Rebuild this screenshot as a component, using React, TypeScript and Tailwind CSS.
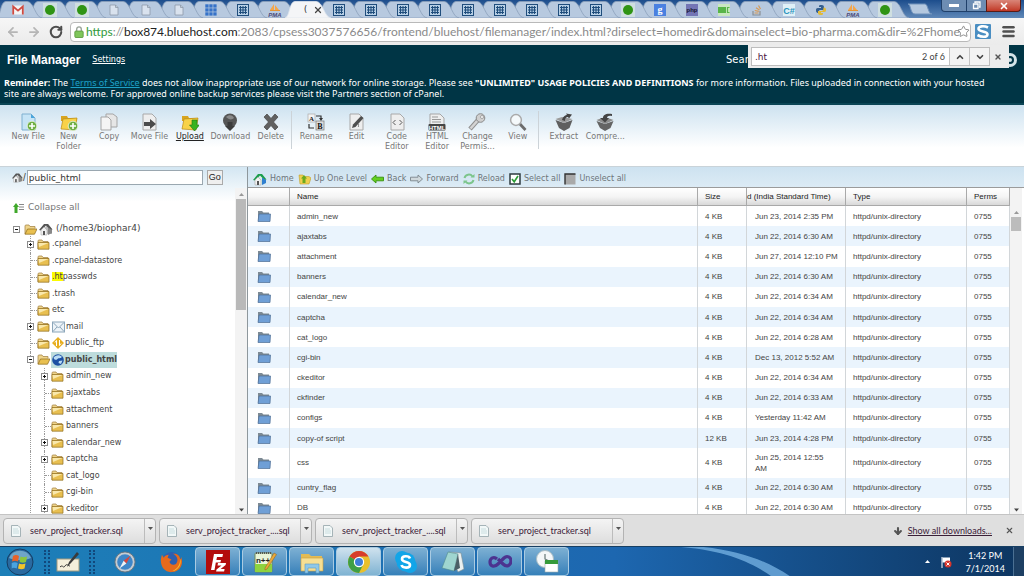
import type { ReactNode } from "react";
import { ArrowDown, ArrowLeft, ArrowRight, ChevronDown, ChevronUp, Menu, RotateCw, Star, X } from "lucide-react";

const SANS = "font-['Verdana','DejaVu_Sans',sans-serif]";
const ARIAL = "font-['Liberation_Sans',Arial,sans-serif]";
const SEGOE = "font-['Lato','Noto_Sans',sans-serif]";
const NOTO = "font-['Noto_Sans',sans-serif]";

/* ---------- Browser tabs ---------- */

type TabKind = "gmail" | "dot" | "page" | "squares" | "grid" | "pma" | "active" | "google" | "php" | "csgreen" | "stack" | "csharp" | "python";

const TABS: TabKind[] = [
  "gmail", "dot", "dot", "page", "page", "page", "squares", "grid", "pma", "active",
  "grid", "grid", "grid", "grid", "grid", "grid", "grid", "grid", "grid",
  "dot", "google", "php", "csgreen", "stack", "csharp", "python", "pma", "dot",
];

function Favicon({ kind }: { kind: TabKind }) {
  switch (kind) {
    case "gmail":
      return (
        <svg viewBox="0 0 12 12" className="size-3">
          <rect x="0.5" y="1.5" width="11" height="9" fill="#f4f4f4" />
          <path d="M1.2 10.5V2.5L6 6.6l4.800-4.100v8" fill="none" stroke="#cf4a41" strokeWidth="1.800" />
        </svg>
      );
    case "dot":
      return (
        <svg viewBox="0 0 14 14" className="size-3.5">
          <rect width="14" height="14" fill="#cfdfe0" />
          <circle cx="7" cy="7" r="5" fill="#2f9414" />
        </svg>
      );
    case "page":
      return (
        <svg viewBox="0 0 12 12" className="size-3">
          <path d="M2 1h5.500L10 3.500V11H2z" fill="#d9e2ee" stroke="#8d99a8" strokeWidth="0.800" />
          <path d="M7.500 1v2.500H10" fill="none" stroke="#8d99a8" strokeWidth="0.800" />
        </svg>
      );
    case "squares":
      return (
        <svg viewBox="0 0 12 12" className="size-3">
          {[0, 4, 8].map((y) => [0, 4, 8].map((x) => <rect key={`${x}-${y}`} x={x + 0.3} y={y + 0.3} width="3.300" height="3.300" fill="#3672c8" />))}
        </svg>
      );
    case "grid":
      return (
        <svg viewBox="0 0 12 12" className="size-3">
          <rect width="12" height="12" fill="#b8d0e6" />
          <rect x="0.5" y="0.5" width="11" height="11" fill="none" stroke="#1f4d7c" />
          <path d="M2 3.500h8M2 6h8M2 8.500h8M3.500 2v8M6 2v8M8.500 2v8" stroke="#1f4d7c" strokeWidth="1.100" />
        </svg>
      );
    case "pma":
      return (
        <svg viewBox="0 0 14 14" className="size-3.5">
          <path d="M6 1v6H2zM7 2l4 5H7z" fill="#f4a64a" />
          <path d="M2 7.500h10" stroke="#e59535" />
          <text x="7" y="13.500" textAnchor="middle" fontSize="6" fontStyle="italic" fontWeight="700" fill="#4a4a78" fontFamily="Liberation Sans">PMA</text>
        </svg>
      );
    case "google":
      return (
        <svg viewBox="0 0 12 12" className="size-3">
          <rect width="12" height="12" fill="#4a80e0" />
          <text x="6" y="8.500" textAnchor="middle" fontSize="10" fontWeight="700" fill="#fff" fontFamily="Liberation Serif">g</text>
        </svg>
      );
    case "php":
      return (
        <svg viewBox="0 0 12 12" className="size-3">
          <rect width="12" height="12" fill="#7375b5" />
          <text x="6" y="8" textAnchor="middle" fontSize="6" fontWeight="700" fill="#16162e" fontFamily="Liberation Sans">php</text>
        </svg>
      );
    case "csgreen":
      return (
        <svg viewBox="0 0 12 12" className="size-3">
          <rect width="12" height="12" fill="#c9e8bf" />
          <rect y="3" width="8" height="6" fill="#58b548" />
          <path d="M11.500 3.500H9.500v5h2" fill="none" stroke="#58b548" strokeWidth="1.200" />
        </svg>
      );
    case "stack":
      return (
        <svg viewBox="0 0 12 12" className="size-3">
          <path d="M2 7v4h7V7" fill="none" stroke="#8b8f94" strokeWidth="1.200" />
          <path d="M3.500 9h4M3.800 6.500l4 .8M5 3.800l3.500 2.100M7.500 1.500l2 3.500" stroke="#d79a55" strokeWidth="1.200" />
        </svg>
      );
    case "csharp":
      return (
        <svg viewBox="0 0 12 12" className="size-3">
          <rect width="12" height="12" fill="#dff0f7" />
          <text x="6" y="9.500" textAnchor="middle" fontSize="9" fontWeight="700" fill="#2a93bd" fontFamily="Liberation Sans">C#</text>
        </svg>
      );
    case "python":
      return (
        <svg viewBox="0 0 12 12" className="size-3">
          <path d="M6 1c3 0 3 1 3 3v2H5c-1.500 0-1.500 3-1.500 3C1 9 1 7 1 6s0-2 2-2h3V3H4c0-1.500 0-2 2-2z" fill="#35608f" />
          <path d="M6 11c-3 0-3-1-3-3V7h4c1.500 0 1.500-3.500 1.500-3.500C11 3.500 11 5 11 6s0 2-2 2H6v1h2c0 1.500 0 2-2 2z" fill="#e3bb38" />
        </svg>
      );
    default:
      return (
        <span className="flex w-full items-center justify-end gap-1.5 pl-1">
          <span className={`${SANS} text-[8px] text-[#222]`}>(</span>
          <X className="size-2.5 text-[#444]" strokeWidth={3} />
        </span>
      );
  }
}

function TabStrip() {
  return (
    <div className="flex h-[18px] shrink-0 overflow-hidden bg-gradient-to-b from-[#1c4d8c] to-[#5f88b8]">
      <div role="tablist" className="flex w-[901px] pl-0.5">
        {TABS.map((kind, i) => {
          const active = kind === "active";
          return (
            <button
              key={i}
              role="tab"
              aria-selected={active}
              aria-label={`Tab ${i + 1}`}
              className="relative flex min-w-0 flex-1 items-center justify-center"
              style={{ zIndex: active ? 60 : 40 - i }}
            >
              <svg viewBox="0 0 46 18" preserveAspectRatio="none" className="absolute top-0 -left-1.5 h-full w-[46px]">
                <path d="M0 18C5 17 4 1.500 10 1.500H31C38 1.500 39 17 46 18z" fill={active ? "#f4f5f7" : "#b7c9df"} stroke={active ? "#dfe6ee" : "#8ba0ba"} strokeWidth="0.800" />
              </svg>
              <span className="relative flex w-full items-center justify-center pt-0.5"><Favicon kind={kind} /></span>
            </button>
          );
        })}
      </div>
      <button aria-label="New tab" className="ml-1.5">
        <svg viewBox="0 0 26 12" className="h-3 w-[26px]">
          <path d="M1 1h17c3 0 3 10 7 10H8C3 11 4 1 1 1z" fill="#b4c8df" stroke="#6f91ba" />
        </svg>
      </button>
      <div className="ml-auto flex h-3 pr-[3px]">
        <button aria-label="Minimize" className="flex w-[26px] items-center justify-center rounded-bl border border-t-0 border-[#20406a] bg-[#6d8db3]">
          <span className="h-[3px] w-2.5 bg-white" />
        </button>
        <button aria-label="Restore" className="flex w-[19px] items-center justify-center border-b border-[#20406a] bg-[#6d8db3]">
          <svg viewBox="0 0 9 9" className="size-[9px]"><path d="M3 2V1h5v5H7M1.500 3h4.500v4.500H1.500z" fill="none" stroke="#fff" strokeWidth="1.300" /></svg>
        </button>
        <button aria-label="Close window" className="flex w-[35px] items-center justify-center rounded-br border border-t-0 border-[#5a1a14] bg-gradient-to-b from-[#d98578] to-[#c03624]">
          <X className="size-2.5 text-white" strokeWidth={4} />
        </button>
      </div>
    </div>
  );
}

function AddressBar() {
  return (
    <div className="flex h-[27px] shrink-0 items-center bg-gradient-to-b from-[#f6f6f6] to-[#ebebeb] pr-2 pl-1.5">
      <button aria-label="Back" className="w-[21px]"><ArrowLeft className="size-3.5 text-[#b5b5b5]" strokeWidth={3} /></button>
      <button aria-label="Forward" className="w-[22px]"><ArrowRight className="size-3.5 text-[#b5b5b5]" strokeWidth={3} /></button>
      <button aria-label="Reload page" className="w-[21px]"><RotateCw className="size-3.5 text-[#4e4e4e]" strokeWidth={3.5} /></button>
      <div className="flex h-5 min-w-0 flex-1 items-center rounded-sm border border-[#b9b9b9] bg-white pl-[3px]">
        <svg viewBox="0 0 10 13" className="h-3 w-2.5 shrink-0">
          <path d="M2.500 6V3.500a2.500 2.500 0 015 0V6" fill="none" stroke="#9aa39a" strokeWidth="1.500" />
          <rect x="0.500" y="5.500" width="9" height="7" rx="1" fill="#7fc65a" stroke="#5f9c42" />
        </svg>
        <div className={`${SEGOE} ml-0.5 min-w-0 flex-1 text-[12px] leading-[18px] whitespace-nowrap text-[#8a8a8a]`}>
          <span className="text-[#2f9a3a]">https</span>://<span className="text-[#222]">box874.bluehost.com</span>:2083/cpsess3037576656/frontend/bluehost/filemanager/index.html?dirselect=homedir&amp;domainselect=bio-pharma.com&amp;dir=%2Fhome
        </div>
        <button aria-label="Bookmark"><Star className="size-[13px] text-[#777]" strokeWidth={1.5} /></button>
      </div>
      <button aria-label="Extension" className="ml-1">
        <svg viewBox="0 0 16 15" className="h-[15px] w-4">
          <rect width="16" height="15" rx="1" fill="#4a8ec2" />
          <path d="M13 3.500C9 1.500 3 2 3.500 5S13 7 12.500 10.500 6 13 2.500 11" fill="none" stroke="#fff" strokeWidth="2.600" />
        </svg>
      </button>
      <button aria-label="Menu" className="ml-2.5"><Menu className="size-[15px] text-[#505050]" strokeWidth={4} /></button>
    </div>
  );
}

function FindBar() {
  return (
    <div className="absolute top-0 right-[15px] z-10 flex h-[23px] w-[261px] items-center bg-[#ececec] px-[3px]">
      <div className="flex h-[19px] w-[239px] items-center border border-[#bdbdbd] bg-white">
        <input aria-label="Find in page" defaultValue=".ht" className={`${SANS} h-full min-w-0 flex-1 pl-[3px] text-[9px] text-[#4a1040] outline-none`} />
        <span className={`${SEGOE} pr-1 text-[9px] text-[#444]`}>2 of 6</span>
        <button aria-label="Previous match" className="flex h-full w-5 items-center justify-center border-l border-[#c4c4c4] bg-[#f3f3f3]"><ChevronUp className="size-2.5 text-[#444]" strokeWidth={4} /></button>
        <button aria-label="Next match" className="flex h-full w-5 items-center justify-center border-l border-[#c4c4c4] bg-[#f3f3f3]"><ChevronDown className="size-2.5 text-[#444]" strokeWidth={4} /></button>
      </div>
      <button aria-label="Close find bar" className="ml-1"><X className="size-2 text-[#555]" strokeWidth={4} /></button>
    </div>
  );
}

function Header() {
  return (
    <header className={`${SANS} relative h-[60px] shrink-0 border-b-2 border-[#0b4656] bg-[#003545] text-white`}>
      <FindBar />
      <div className="flex h-[29px] items-center px-[7px]">
        <h1 className={`${ARIAL} text-[12px] font-bold`}>File Manager</h1>
        <a href="#settings" className="ml-3 text-[8px] underline">Settings</a>
        <span className="ml-auto w-[277px] text-[10px]">Search</span>
        <button aria-label="Go search" className="flex size-3.5 items-center justify-center rounded-full bg-[#d5e4e8]"><span className="size-2 rounded-full border-2 border-[#003545]" /></button>
      </div>
      <p className={`${NOTO} pt-[3px] pl-1 text-[9px] leading-[11px] whitespace-nowrap`}>
        <b>Reminder:</b> The <a href="#terms" className="text-[#1ea2c8] underline">Terms of Service</a> does not allow inappropriate use of our network for online storage. Please see <b>"UNLIMITED" USAGE POLICIES AND DEFINITIONS</b> for more information. Files uploaded in connection with your hosted
        <br />
        site are always welcome. For approved online backup services please visit the Partners section of cPanel.
      </p>
    </header>
  );
}

/* ---------- Main toolbar ---------- */

const pageShape = <path d="M3 1h9l4 4v12H3z" fill="#eee" stroke="#a8a8a8" />;
const yellowFolder = (
  <>
    <path d="M1 3h6l1 2h9v3H1z" fill="#d8a520" />
    <path d="M1 16L3 6l14-1-2 12z" fill="#f8d247" stroke="#b98a16" strokeWidth="0.700" />
  </>
);
const plusBadge = (
  <>
    <circle cx="13" cy="13" r="4.800" fill="#6faf45" stroke="#eef7e6" strokeWidth="0.800" />
    <path d="M13 10v6M10 13h6" stroke="#fff" strokeWidth="1.600" />
  </>
);

const ICONS: Record<string, ReactNode> = {
  "New File": <><path d="M3 1h9l4 4v12H3z" fill="#c6e4f6" stroke="#7fb0d0" /><path d="M12 1v4h4z" fill="#4aa5dc" />{plusBadge}</>,
  "New Folder": <>{yellowFolder}{plusBadge}</>,
  Copy: <><path d="M6 1h7l4 3v10H6z" fill="#e6e6e6" stroke="#a5a5a5" /><path d="M1 4h7l3 3v10H1z" fill="#f4f4f4" stroke="#a5a5a5" /></>,
  "Move File": <>{pageShape}<path d="M4 9h6V6l6 5-6 5v-3H4z" fill="#4b4b4b" /></>,
  Upload: <>{yellowFolder}<path d="M11 7h5v5h2.500L13.500 18 8.500 12H11z" fill="#39b320" stroke="#1d7a10" strokeWidth="0.600" /></>,
  Download: <><circle cx="9" cy="7.500" r="7" fill="#565656" /><path d="M5 4c3-3 7-2 8 1-2 2-5 2-8-1z" fill="#8a8a8a" /><path d="M6.500 9h5v4H14l-5 5-5-5h2.500z" fill="#3c3c3c" /></>,
  Delete: <path d="M2 4l3-3 4 4.500L13 1l3 3-4.500 5L16 14l-3 3-4-4.500L5 17l-3-3 4.500-5z" fill="#616161" stroke="#444" strokeWidth="0.700" />,
  Rename: <><rect x="1" y="1" width="7" height="8" fill="#f3f3f3" stroke="#aaa" strokeWidth="0.700" /><text x="4.500" y="7.800" textAnchor="middle" fontSize="7" fontWeight="700" fill="#222" fontFamily="Liberation Serif">A</text><rect x="9" y="8" width="8" height="9" fill="#ddd" stroke="#777" strokeWidth="0.700" /><text x="13" y="15.500" textAnchor="middle" fontSize="8" fontWeight="700" fill="#111" fontFamily="Liberation Serif">B</text><path d="M9 3h5v3M2 11v4h5" fill="none" stroke="#333" strokeWidth="1.200" /><path d="M12 5h4l-2 3z" fill="#333" /></>,
  Edit: <>{pageShape}<path d="M5 15l1-3.500 8-8.500 2.500 2-8 9z" fill="#4e4e4e" /><path d="M12 14c-2-1 1-2-1-3" stroke="#777" fill="none" /></>,
  "Code Editor": <>{pageShape}<path d="M7.500 7L5 9.500 7.500 12M11.500 7L14 9.500 11.500 12" fill="none" stroke="#555" /></>,
  "HTML Editor": <><path d="M2 1h10l4 4v7H2z" fill="#eee" stroke="#a5a5a5" /><path d="M4 4h6M4 6.500h9M4 9h9" stroke="#999" /><rect x="0.500" y="11" width="17" height="6.500" rx="1" fill="#454545" /><text x="9" y="16.500" textAnchor="middle" fontSize="6" fontWeight="700" fill="#fff" fontFamily="Liberation Sans">HTML</text></>,
  "Change Permis...": <><path d="M2 16l8-9" stroke="#8e8e8e" strokeWidth="4.500" /><path d="M2.500 15.500l8-9" stroke="#d4d4d4" strokeWidth="2.600" /><circle cx="12.500" cy="5" r="4.300" fill="#cfcfcf" stroke="#8a8a8a" /><circle cx="14" cy="4" r="1.500" fill="#fff" stroke="#8a8a8a" strokeWidth="0.700" /></>,
  View: <><path d="M10.500 10.500l6 6.500" stroke="#6c6c6c" strokeWidth="2.800" /><circle cx="7" cy="7" r="5.400" fill="#f5f9fb" stroke="#aaa" strokeWidth="1.500" /></>,
  Extract: <><path d="M0.500 7l8.500 3 8.500-3-3 8-5.500 3-5-3z" fill="#5f5f5f" /><path d="M0.500 6l6.500-2 10.500 2L9 10z" fill="#9a9a9a" /><path d="M7 7c1-4 4-5 5-5l-1-1.500 6 1-3 4-1-1.500c-2 0-3 1-3 4z" fill="#444" /></>,
  "Compre...": <><path d="M0.500 8L9 11l8.500-3-3 7L9 18l-5-3z" fill="#646464" /><path d="M0.500 7L9 4l8.500 3L9 11z" fill="#8c8c8c" /><path d="M16 1C10 0 7 2 7 5H4l5 4.500L13 5h-2c0-1 1-3 5-2z" fill="#444" /></>,
};

const GROUPS: { width: string; items: string[] }[] = [
  { width: "w-[283px]", items: ["New File", "New Folder", "Copy", "Move File", "Upload", "Download", "Delete"] },
  { width: "w-[247px]", items: ["Rename", "Edit", "Code Editor", "HTML Editor", "Change Permis...", "View"] },
  { width: "w-[88px]", items: ["Extract", "Compre..."] },
];

const WRAPPED = ["New Folder", "Code Editor", "HTML Editor", "Change Permis..."];

function MainToolbar() {
  return (
    <div className={`${SANS} flex h-[61px] shrink-0 bg-gradient-to-b from-[#cde2f0] to-white to-70% pt-1.5 pl-2`}>
      {GROUPS.map((group, g) => (
        <div key={g} className={`${group.width} ${g ? "border-l border-[#ccd3d8] pl-1" : ""} flex h-[38px]`}>
          {group.items.map((name) => (
            <button key={name} className="flex min-w-0 flex-1 flex-col items-center pt-0.5 text-[8px] leading-[10px] text-[#777]">
              <svg viewBox="0 0 18 18" className="size-[18px] shrink-0">{ICONS[name]}</svg>
              <span className={name === "Upload" ? "pt-px text-[#222] underline" : WRAPPED.includes(name) ? "w-9 pt-px" : "pt-px whitespace-nowrap"}>{name}</span>
            </button>
          ))}
        </div>
      ))}
    </div>
  );
}

/* ---------- Folder tree ---------- */

function HomeIcon({ colored = false, small = false }: { colored?: boolean; small?: boolean }) {
  return (
    <svg viewBox="0 0 14 14" className={`${small ? "size-[11px]" : "size-3.5"} shrink-0`}>
      <path d="M4 8l5-6 4 5v5H4z" fill={colored ? "#d8f0e4" : "#bcbcbc"} />
      <path d="M0 8l5-6 4 0 4.500 5.500-2 .5L7 3.500 2 8.500z" fill={colored ? "#1c9e4c" : "#555"} />
      <path d="M2 8l3-3 3 3v5H2z" fill="#f2f2f2" stroke="#999" strokeWidth="0.500" />
      <path d="M9 5.500l4 2.500v3l-4 2z" fill={colored ? "#2f7fd0" : "#888"} />
      <rect x="4" y="9" width="2" height="4" fill="#555" />
    </svg>
  );
}

function TreeFolder({ open = false }: { open?: boolean }) {
  return (
    <svg viewBox="0 0 13 11" className="h-[11px] w-[13px] shrink-0">
      <path d="M1 10V2q0-1 1-1h3l1 1.500h5v2" fill="#efd48a" stroke="#a8894b" strokeWidth="0.800" />
      {open ? <path d="M1 10.200L3.500 5H13l-2.500 5.200z" fill="#e9c050" stroke="#8d6a1c" strokeWidth="0.700" /> : <path d="M1 3.500h11v6.700H1z" fill="#e8bf50" stroke="#8d6a1c" strokeWidth="0.700" />}
      {!open && <path d="M1.500 4h10L2 8z" fill="#f9e8ac" />}
    </svg>
  );
}

interface Node { name: ReactNode; key: string; depth: 1 | 2; toggle?: "+" | "-"; extra?: ReactNode }

const mailIcon = (
  <svg viewBox="0 0 13 12" className="h-3 w-[13px] shrink-0">
    <rect x="0.500" y="1" width="12" height="10" fill="#edf3f8" stroke="#8ca6ba" />
    <path d="M1 1.500L6.500 7 12 1.500M1 10.500L5 6M12 10.500L8 6" fill="none" stroke="#8ca6ba" />
  </svg>
);
const ftpIcon = (
  <svg viewBox="0 0 12 12" className="size-3 shrink-0">
    <path d="M6 0l6 6-6 6-6-6z" fill="#e7ae1e" />
    <path d="M4.500 9V3.500L3 5.500M7.500 3v5.500L9 6.500" fill="none" stroke="#fff" />
  </svg>
);
const globeIcon = (
  <svg viewBox="0 0 12 12" className="size-3 shrink-0">
    <circle cx="6" cy="6" r="5.800" fill="#1c4fa3" />
    <path d="M1.500 3.500C3 1 8 0 10 3 8 5 7 3.500 5.500 5S2 6 1.500 3.500zM7 7l3.500-.5L9 10 6.500 9z" fill="#b9dcf4" />
  </svg>
);

const NODES: Node[] = [
  { key: ".cpanel", name: ".cpanel", depth: 1, toggle: "+" },
  { key: ".cpanel-datastore", name: ".cpanel-datastore", depth: 1 },
  { key: ".htpasswds", name: <><mark className="bg-[#fbfb00] text-inherit">.ht</mark>passwds</>, depth: 1 },
  { key: ".trash", name: ".trash", depth: 1 },
  { key: "etc", name: "etc", depth: 1 },
  { key: "mail", name: "mail", depth: 1, toggle: "+", extra: mailIcon },
  { key: "public_ftp", name: "public_ftp", depth: 1, extra: ftpIcon },
  { key: "public_html", name: "public_html", depth: 1, toggle: "-", extra: globeIcon },
  { key: "admin_new", name: "admin_new", depth: 2, toggle: "+" },
  { key: "ajaxtabs", name: "ajaxtabs", depth: 2 },
  { key: "attachment", name: "attachment", depth: 2 },
  { key: "banners", name: "banners", depth: 2 },
  { key: "calendar_new", name: "calendar_new", depth: 2, toggle: "+" },
  { key: "captcha", name: "captcha", depth: 2, toggle: "+" },
  { key: "cat_logo", name: "cat_logo", depth: 2 },
  { key: "cgi-bin", name: "cgi-bin", depth: 2 },
  { key: "ckeditor", name: "ckeditor", depth: 2, toggle: "+" },
];

function Toggle({ sign }: { sign: "+" | "-" }) {
  return (
    <svg viewBox="0 0 7 7" className="size-[7px]">
      <rect x="0.500" y="0.500" width="6" height="6" fill="#fff" stroke="#8c8c8c" />
      <path d={sign === "+" ? "M2 3.500h3M3.500 2v3" : "M2 3.500h3"} stroke="#111" />
    </svg>
  );
}

function Tree() {
  return (
    <ul className="grid h-[281px] auto-rows-fr pl-[27px]">
      {NODES.map((node) => {
        const selected = node.key === "public_html";
        return (
          <li key={node.key} className="flex min-h-0 items-center">
            {node.depth === 2 && <span className="ml-[3px] w-[11px] self-stretch border-l border-dotted border-[#999]" />}
            <span className="ml-[3px] flex w-[7px] items-center self-stretch border-l border-dotted border-[#999]">
              {node.toggle ? (
                <button aria-label={`Toggle ${node.key}`} className="-ml-1 flex"><Toggle sign={node.toggle} /></button>
              ) : (
                <span className="w-full border-t border-dotted border-[#999]" />
              )}
            </span>
            <TreeFolder open={selected} />
            <a href={`#${node.key}`} className={`${selected ? "bg-[#bddcdc] font-bold" : ""} ml-px flex h-4 items-center gap-px pl-px text-[#444]`}>
              {node.extra}
              <span>{node.name}</span>
            </a>
          </li>
        );
      })}
    </ul>
  );
}

function ScrollArrow({ down = false }: { down?: boolean }) {
  return (
    <svg viewBox="0 0 11 9" className="h-[9px] w-[11px] shrink-0">
      <path d={down ? "M3 3.500h5L5.500 6.500z" : "M3 6h5L5.500 3z"} fill={down ? "#444" : "#999"} />
    </svg>
  );
}

function Sidebar() {
  return (
    <aside className={`${SANS} flex min-h-0 w-[248px] shrink-0 flex-col border-r border-[#8e979c] bg-gradient-to-b from-[#d3e6f2] to-white to-10% text-[8px]`}>
      <form className="flex h-[21px] shrink-0 items-center pl-3 text-[#444]" onSubmit={(e) => e.preventDefault()}>
        <HomeIcon small />
        <label htmlFor="path" className={`${ARIAL} mr-px text-[10px]`}>/</label>
        <input id="path" aria-label="Path" defaultValue="public_html" className="h-[15px] w-[176px] border border-[#9aa7b0] bg-white px-px text-[9px] text-[#333] outline-none" />
        <button className={`${ARIAL} ml-1 h-[15px] w-4 border border-[#aaa] bg-[#efefef] text-[9px] text-[#222]`}>Go</button>
      </form>
      <div className="flex min-h-0 flex-1">
        <div className="min-w-0 flex-1 overflow-hidden pt-1.5">
          <button className="flex h-7 items-center gap-1 pl-[13px] text-[9px] text-[#777]">
            <svg viewBox="0 0 11 10" className="h-2.5 w-[11px]">
              <path d="M3 0l3 4H4.500v6h-3V4H0z" fill="#3fa82a" />
              <path d="M6 1.500h5M6 4h5M6 6.500h5" stroke="#888" />
            </svg>
            Collapse all
          </button>
          <div className="flex h-3.5 items-center pl-[13px] text-[#444]">
            <button aria-label="Toggle home" className="mr-1 flex"><Toggle sign="-" /></button>
            <TreeFolder open />
            <span className="mr-[3px] ml-0.5"><HomeIcon /></span>
            <a href="#home" className="text-[9px]">(/home3/biophar4)</a>
          </div>
          <Tree />
        </div>
        <div className="flex w-3 shrink-0 flex-col items-center bg-[#f3f3f3] pt-0.5">
          <ScrollArrow />
          <span className="h-[111px] w-2.5 bg-[#b9b9b9]" />
          <span className="mt-auto"><ScrollArrow down /></span>
        </div>
      </div>
    </aside>
  );
}

/* ---------- File listing ---------- */

interface FileRow { name: string; size: string; date: string }

const FILES: FileRow[] = [
  { name: "admin_new", size: "4 KB", date: "Jun 23, 2014 2:35 PM" },
  { name: "ajaxtabs", size: "4 KB", date: "Jun 22, 2014 6:30 AM" },
  { name: "attachment", size: "4 KB", date: "Jun 27, 2014 12:10 PM" },
  { name: "banners", size: "4 KB", date: "Jun 22, 2014 6:30 AM" },
  { name: "calendar_new", size: "4 KB", date: "Jun 22, 2014 6:34 AM" },
  { name: "captcha", size: "4 KB", date: "Jun 22, 2014 6:34 AM" },
  { name: "cat_logo", size: "4 KB", date: "Jun 22, 2014 6:28 AM" },
  { name: "cgi-bin", size: "4 KB", date: "Dec 13, 2012 5:52 AM" },
  { name: "ckeditor", size: "4 KB", date: "Jun 22, 2014 6:34 AM" },
  { name: "ckfinder", size: "4 KB", date: "Jun 22, 2014 6:33 AM" },
  { name: "configs", size: "4 KB", date: "Yesterday 11:42 AM" },
  { name: "copy-of script", size: "12 KB", date: "Jun 23, 2014 4:28 PM" },
  { name: "css", size: "4 KB", date: "Jun 25, 2014 12:55\nAM" },
  { name: "cuntry_flag", size: "4 KB", date: "Jun 22, 2014 6:30 AM" },
  { name: "DB", size: "4 KB", date: "Jun 22, 2014 6:30 AM" },
];

const ACTIONS: { label: string; icon: ReactNode }[] = [
  { label: "Home", icon: <HomeIcon colored /> },
  { label: "Up One Level", icon: <svg viewBox="0 0 13 12" className="h-3 w-[13px]"><path d="M1 2h4l1 1.500h5L13 5l-2 6H2z" fill="#f0d050" stroke="#bfa02c" strokeWidth="0.600" /><path d="M6 2l3 3.500H7.500V10H4.500V5.500H3z" fill="#6aaa20" /></svg> },
  { label: "Back", icon: <svg viewBox="0 0 13 10" className="h-2.5 w-[13px]"><path d="M0.500 5L5 1v2.200h7.500v3.600H5V9z" fill="#63cf1e" stroke="#37900d" strokeWidth="0.900" /></svg> },
  { label: "Forward", icon: <svg viewBox="0 0 13 10" className="h-2.5 w-[13px]"><path d="M12.500 5L8 1v2.200H0.500v3.600H8V9z" fill="#cfd8dc" stroke="#7b868c" strokeWidth="0.900" /></svg> },
  { label: "Reload", icon: <svg viewBox="0 0 12 12" className="size-3"><path d="M1.500 5a4.500 4.500 0 018-1.500M10.500 7a4.500 4.500 0 01-8 1.500" fill="none" stroke="#7cc58c" strokeWidth="2" /><path d="M7.500 4.500h4V1zM4.500 7.500H.5V11z" fill="#7cc58c" /></svg> },
  { label: "Select all", icon: <svg viewBox="0 0 12 12" className="size-3"><rect x="1" y="1" width="10" height="10" fill="#fff" stroke="#2e3b40" strokeWidth="1.500" /><path d="M3 6l2.200 2.800L9 3" fill="none" stroke="#2b9d36" strokeWidth="1.600" /></svg> },
  { label: "Unselect all", icon: <svg viewBox="0 0 12 12" className="size-3"><rect x="1" y="1" width="10.500" height="10.500" fill="#a9a9a9" /><path d="M1 11.500V1h10.500" fill="none" stroke="#333" strokeWidth="1.400" /></svg> },
];

const CELL = "border-r border-[#d2d6d9]";
const HEAD = "border-r border-b border-[#a9a9a9] font-normal";

function FileList() {
  return (
    <main className="flex min-h-0 min-w-0 flex-1 flex-col">
      <div className={`${SANS} flex h-5 shrink-0 items-center gap-1 bg-gradient-to-b from-[#cde2f0] to-[#dcebf5] pt-1 pl-[5px] text-[8px] text-[#6d757a]`}>
        {ACTIONS.map((a) => (
          <button key={a.label} className="flex items-center gap-[3px] whitespace-nowrap">{a.icon}{a.label}</button>
        ))}
      </div>
      <div className="flex min-h-0 flex-1 border-t border-[#9b9b9b]">
        <div className="min-h-0 min-w-0 flex-1 overflow-hidden">
          <table className={`${ARIAL} h-[330px] w-full table-fixed border-separate border-spacing-0 text-left text-[8px] leading-[11px] text-[#444]`}>
            <colgroup>
              <col className="w-[42px]" /><col /><col className="w-[49px]" /><col className="w-[99px]" /><col className="w-[121px]" /><col className="w-[43px]" />
            </colgroup>
            <thead>
              <tr className="h-[18px] bg-gradient-to-b from-white via-[#f4f4f4] to-[#d5d5d5] text-[#222]">
                <th className={HEAD} aria-label="Icon" />
                <th className={`${HEAD} pl-[7px]`}>Name</th>
                <th className={`${HEAD} pl-[7px]`}>Size</th>
                <th className={`${HEAD} whitespace-nowrap`}>d (India Standard Time)</th>
                <th className={`${HEAD} pl-[7px]`}>Type</th>
                <th className={`${HEAD} pl-[7px]`}>Perms</th>
              </tr>
            </thead>
            <tbody>
              {FILES.map((f) => (
                <tr key={f.name} className={`${f.name === "css" ? "h-[29px]" : "h-5"} odd:bg-white even:bg-[#eaf4fd]`}>
                  <td className={CELL}>
                    <svg viewBox="0 0 14 12" className="ml-[9px] h-3 w-3.5">
                      <path d="M1 11V1h4l1.500 1.500H12V5" fill="#7d8a94" />
                      <path d="M1 11.500L2 4h11.500L13 11.500z" fill="#6f9fd6" stroke="#4d6d94" strokeWidth="0.700" />
                    </svg>
                  </td>
                  <td className={`${CELL} pl-[7px]`}>{f.name}</td>
                  <td className={`${CELL} pl-[7px]`}>{f.size}</td>
                  <td className={`${CELL} pr-1 pl-2 whitespace-pre-line`}>{f.date}</td>
                  <td className={`${CELL} pl-[7px]`}>httpd/unix-directory</td>
                  <td className={`${CELL} pl-[7px]`}>0755</td>
                </tr>
              ))}
            </tbody>
          </table>
        </div>
        <div className="mr-0.5 flex w-3 shrink-0 flex-col items-center bg-[#f3f3f3] pt-5">
          <ScrollArrow />
          <span className="h-3.5 w-2.5 bg-[#bcbcbc]" />
          <span className="mt-auto"><ScrollArrow down /></span>
        </div>
      </div>
    </main>
  );
}

/* ---------- Download shelf ---------- */

const DOWNLOADS = ["serv_project_tracker.sql", "serv_project_tracker_....sql", "serv_project_tracker_....sql", "serv_project_tracker.sql"];

function DownloadShelf() {
  return (
    <div className={`${SEGOE} flex h-8 shrink-0 items-center gap-[3px] border-t border-[#c4c4c4] bg-[#dfdfdf] pl-[3px] text-[9px] text-[#3a2038]`}>
      {DOWNLOADS.map((name, i) => (
        <div key={i} className="flex h-[26px] w-[153px] rounded-sm border border-[#b3b3b3] bg-gradient-to-b from-[#f4f4f4] to-[#dedede]">
          <button className="flex min-w-0 flex-1 items-center gap-[9px] border-r border-[#bcbcbc] pl-[7px] whitespace-nowrap">
            <svg viewBox="0 0 10 12" className="h-3 w-2.5 shrink-0"><path d="M.5.5H7L9.500 3v8.500h-9z" fill="#f2f8f8" stroke="#93a3a8" strokeWidth="0.800" /><path d="M2 4h5M2 6h6M2 8h6" stroke="#bfd5d8" strokeWidth="0.800" /></svg>
            {name}
          </button>
          <button aria-label={`Options for download ${i + 1}`} className="flex w-2.5 justify-center pt-2">
            <svg viewBox="0 0 5 3" className="h-[3px] w-[5px]"><path d="M0 0h5L2.500 3z" fill="#555" /></svg>
          </button>
        </div>
      ))}
      <ArrowDown className="ml-auto size-2.5 text-[#555]" strokeWidth={5} />
      <a href="#downloads" className="ml-0.5 underline">Show all downloads...</a>
      <button aria-label="Close downloads" className="mr-2.5 ml-2.5"><X className="size-[9px] text-[#555]" strokeWidth={3} /></button>
    </div>
  );
}

/* ---------- Taskbar ---------- */

const APPS: { name: string; icon: ReactNode; active?: boolean }[] = [
  { name: "FileZilla", icon: <><rect width="24" height="24" fill="#b30c0c" /><path d="M5 20L8 4h9l-.6 3H11l-.6 3H15l-.6 2.600H9.800L8.500 20zM12 13h8l-.4 2-5 4h4l-.5 2.500h-8l.4-2 5-4h-4z" fill="#fff" /></> },
  { name: "Notepad++", icon: <><rect x="2" y="3" width="17" height="19" rx="1" fill="#e9f5d8" stroke="#6f8a58" /><rect x="2" y="14" width="17" height="8" fill="#8ed33f" /><path d="M3 3h15" stroke="#555" strokeWidth="2" strokeDasharray="1 1" /><text x="10" y="13" textAnchor="middle" fontSize="8" fontWeight="700" fill="#222" fontFamily="Liberation Sans">n++</text><path d="M12 18L21 3l2.500 1.500L14 19l-2 1z" fill="#e9a83a" stroke="#8d6021" strokeWidth="0.500" /></> },
  { name: "Explorer", icon: <><path d="M1 4h8l2 2h11v15H1z" fill="#e3bb54" /><path d="M1 8h22v13H1z" fill="#f6df93" stroke="#c99d3d" strokeWidth="0.600" /><path d="M5 14h14v9h-3v-5H8v5H5z" fill="#8fc8e8" stroke="#5b9ac4" strokeWidth="0.600" /></> },
  { name: "Chrome", active: true, icon: <><circle cx="12" cy="12" r="11" fill="#e8c02c" /><path d="M12 12L2.500 6.500A11 11 0 0121.500 6.500H12z" fill="#d73c2c" /><path d="M12 12L2.500 6.500A11 11 0 0012 23l4-8z" fill="#3f9f45" /><circle cx="12" cy="12" r="5.200" fill="#fff" /><circle cx="12" cy="12" r="4" fill="#3f7fd8" /></> },
  { name: "Skype", icon: <><circle cx="8" cy="8" r="7" fill="#12a5e8" /><circle cx="16" cy="16" r="7" fill="#12a5e8" /><circle cx="12" cy="12" r="9.500" fill="#12a5e8" /><path d="M16 8.500c-1-3-8-3-8 .5 0 4 8 2 8 6 0 3.500-7.500 3.500-8.500 0" fill="none" stroke="#fff" strokeWidth="2.600" /></> },
  { name: "Notes", icon: <><path d="M8 2l12 1 3 16-6 3z" fill="#eaf0f0" stroke="#7a8d92" strokeWidth="0.600" /><path d="M7 2l10 2-4 17L1 18z" fill="#9fd5d0" stroke="#4f8a8c" strokeWidth="0.600" /><path d="M13 21l4-17 2 14z" fill="#4b5f66" /></> },
  { name: "Visual Studio", icon: <path d="M9 9c-3-3-7-1-7 3s4 6 8 2l6-6c3-3 7-1 7 3s-4 7-8 3l-5-5" fill="none" stroke="#4c3390" strokeWidth="3.200" /> },
  { name: "Scheduler", icon: <><circle cx="10" cy="9" r="8.500" fill="#f4f7f8" stroke="#a8bcc4" /><path d="M10 4v5l4 2" fill="none" stroke="#677" strokeWidth="1.200" /><rect x="10" y="11" width="13" height="11" fill="#fff" stroke="#9aa" strokeWidth="0.600" /><path d="M10 10h13v4H10z" fill="#359a3a" /></> },
];

function Dots() {
  return <span className="h-6 w-1.5 border-x-2 border-dotted border-[#11487c]" />;
}

function Taskbar() {
  return (
    <footer className={`${SEGOE} flex h-[30px] shrink-0 items-center border-t border-[#173f63] bg-gradient-to-r from-[#1d7fb8] via-[#1d67b0] via-60% to-[#0d3560] text-white`}>
      <button aria-label="Start" className="ml-1.5">
        <svg viewBox="0 0 28 28" className="size-7">
          <circle cx="14" cy="14" r="13" fill="#2a6aa0" stroke="#143c62" strokeWidth="1" />
          <path d="M3 10a12 12 0 0122 0c-7 3-15 3-22 0z" fill="#6fa5c8" />
          <path d="M7 8c3-1.500 4-1 6 0l-1 5.500c-2-1-4-1-6 0z" fill="#e8622a" />
          <path d="M14.500 8.500c2 1 4 1 6.500 0l-1 5.500c-2 1-4 1-6.500 0z" fill="#8cc63c" />
          <path d="M5.700 15c2-1 4-1 6 0l-1 5.500c-2-1-4-1-5 0z" fill="#4aa3e0" />
          <path d="M13 15.500c2 1 4 1 6.500 0l-1 5c-2 1-4 1-6.500 0z" fill="#f5c52b" />
        </svg>
      </button>
      <span className="ml-2.5 flex"><Dots /></span>
      <button aria-label="Input panel" className="ml-1.5">
        <svg viewBox="0 0 24 20" className="h-5 w-6"><rect x="1" y="7" width="22" height="12" fill="#f4efdc" stroke="#a39a7c" /><path d="M4 15c3-3 3 2 5-1s3 0 5 0" fill="none" stroke="#333" /><path d="M11 15l2-5 8-10 2 2-8 9z" fill="#3a3a3a" /></svg>
      </button>
      <span className="ml-[9px] flex"><Dots /></span>
      <button aria-label="Safari" className="ml-[19px]">
        <svg viewBox="0 0 24 24" className="size-[22px]"><circle cx="12" cy="12" r="11" fill="#c5ccd2" stroke="#68727a" /><circle cx="12" cy="12" r="8.500" fill="#3e86c8" /><path d="M18 5l-4.500 8.500-3-3z" fill="#d8453a" /><path d="M6 19l4.500-8.500 3 3z" fill="#eef2f5" /></svg>
      </button>
      <button aria-label="Firefox" className="mr-3 ml-6">
        <svg viewBox="0 0 24 24" className="size-[23px]"><circle cx="12" cy="12" r="10" fill="#2d5fb0" /><path d="M13 4c5-1 8 2 8 6 1-1 1-3 1-3 3 8-1 15-9 16S0 17 1 9l1-4 2 3c1-2 3-3 5-3L8 8l4 2-2 2c0 3 4 5 7 2 3-4 0-9-4-10z" fill="#e66a1c" /><path d="M21 9c2 6-2 12-8 13 6-3 8-7 8-13z" fill="#f6c22e" /></svg>
      </button>
      <div className="flex gap-0.5">
        {APPS.map((app) => (
          <button
            key={app.name}
            aria-label={app.name}
            className={`${app.active ? "bg-gradient-to-b from-[#cfe2ee] to-[#7fb3d2]" : "bg-gradient-to-b from-[#7db0d3] to-[#3580b9]"} flex h-[29px] w-[45px] items-center justify-center rounded-sm border border-[#a9cbe2]`}
          >
            <svg viewBox="0 0 24 24" className="size-6">{app.icon}</svg>
          </button>
        ))}
      </div>
      <svg viewBox="0 0 130 29" preserveAspectRatio="none" className="ml-28 h-full min-w-0 flex-1">
        <path d="M0 0C25 4 38 16 48 29H58C46 14 32 4 12 0z" fill="#7fbbea" opacity="0.700" />
      </svg>
      <button aria-label="Show hidden icons"><svg viewBox="0 0 5 3" className="h-[3px] w-[5px]"><path d="M0 3h5L2.500 0z" fill="#fff" /></svg></button>
      <button aria-label="Action center" className="ml-2.5">
        <svg viewBox="0 0 12 12" className="size-3"><path d="M2 1v11" stroke="#fff" /><path d="M2.500 1.500H10v5H2.500z" fill="#fff" /><circle cx="8" cy="8" r="3.500" fill="#d8362c" /><path d="M6.500 6.500l3 3M9.500 6.500l-3 3" stroke="#fff" /></svg>
      </button>
      <div className="mr-2 ml-3.5 text-center text-[9px] leading-[13px]">
        <div>1:42 PM</div>
        <div>7/1/2014</div>
      </div>
      <button aria-label="Show desktop" className="h-full w-[11px] border-l border-[#4b7093] bg-[#1d3f63]" />
    </footer>
  );
}

export default function App() {
  return (
    <div className="flex h-screen flex-col overflow-hidden bg-white">
      <TabStrip />
      <AddressBar />
      <Header />
      <MainToolbar />
      <div className="flex min-h-0 flex-1 border-t border-[#c9d3d9]">
        <Sidebar />
        <FileList />
      </div>
      <DownloadShelf />
      <Taskbar />
    </div>
  );
}
